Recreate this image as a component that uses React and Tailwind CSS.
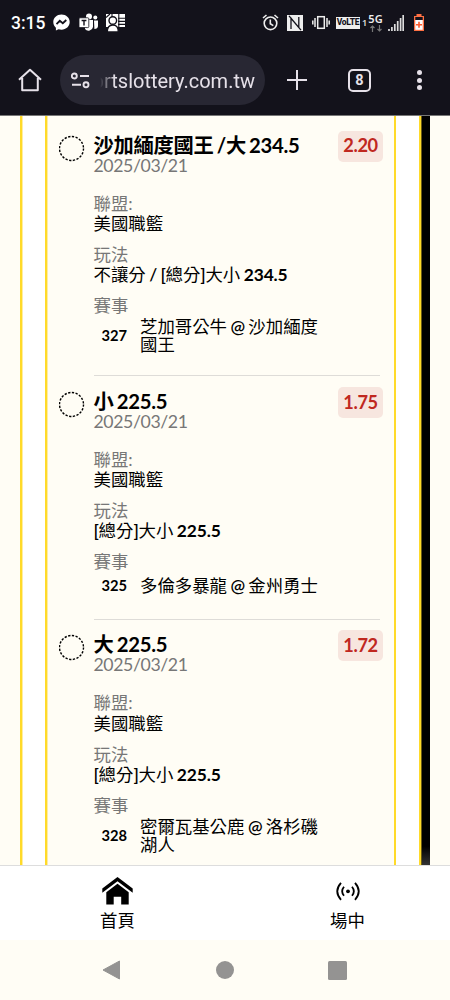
import React from "react";

const bets = [
  {
    title: "沙加緬度國王 /大 234.5",
    odds: "2.20",
    play: ["不讓分", " / [", "總分", "]", "大小"],
    total: "234.5",
    code: "327",
    match: [["芝加哥公牛", "沙加緬度"], ["國王"]],
  },
  {
    title: "小 225.5",
    odds: "1.75",
    play: ["", "[", "總分", "]", "大小"],
    total: "225.5",
    code: "325",
    match: [["多倫多暴龍", "金州勇士"]],
  },
  {
    title: "大 225.5",
    odds: "1.72",
    play: ["", "[", "總分", "]", "大小"],
    total: "225.5",
    code: "328",
    match: [["密爾瓦基公鹿", "洛杉磯"], ["湖人"]],
  },
];

function StatusBar() {
  return (
    <div className="flex h-[45px] items-center pl-[11px] pr-[25px] text-white">
      <span className="w-[42px] font-[Roboto] text-[17.500px] font-medium leading-[20px]">3:15</span>
      <svg className="h-[17px] w-[17px]" viewBox="0 0 17 17">
        <path fill="#fff" d="M8.5.5C3.9.5.3 3.8.3 8.1c0 2.4 1 4.2 2.6 5.6v2.8l2.6-1.2c1 .3 2 .4 3 .4 4.600 0 8.200-3.300 8.200-7.600S13.100.5 8.500.5z" />
        <path d="M3.500 10.200 6.800 6.800 9.800 9.200 13.300 6" fill="none" stroke="#13121b" strokeWidth="1.800" />
      </svg>
      <svg className="ml-[9px] h-[19px] w-[20px]" viewBox="0 0 20 19">
        <circle cx="10" cy="3.600" r="3" fill="#fff" />
        <circle cx="16.300" cy="4.500" r="2" fill="#fff" />
        <path fill="#fff" d="M6 7h8v7a4.500 4.500 0 0 1-8 2zM15 7.500h4v5.500c0 2-1.500 3-3.600 3z" />
        <rect x="0" y="4.800" width="9.800" height="9.800" rx="1" fill="#fff" stroke="#13121b" strokeWidth=".8" />
        <path d="M2.600 7.500h4.800M5 7.500v5" stroke="#13121b" strokeWidth="1.400" />
      </svg>
      <svg className="ml-[7px] h-[19px] w-[19px]" viewBox="0 0 19 19">
        <path fill="#fff" d="M0 1h19v13H0z" />
        <path d="M6 1v3M12.800 1v14M12 5.300h7M12 8.400h7M12 11.400h7M0 4.500 4 1" stroke="#13121b" strokeWidth="1.100" />
        <circle cx="6.800" cy="7.500" r="3.800" fill="#fff" stroke="#13121b" strokeWidth="1.400" />
        <path d="M1.300 19c0-5 2.200-7 5.500-7s5.500 2 5.500 7z" fill="#fff" stroke="#13121b" strokeWidth="1.300" />
      </svg>
      <div className="grow" />
      <svg className="h-[17px] w-[17px]" viewBox="0 0 17 17" fill="none" stroke="#eee" strokeWidth="1.600">
        <circle cx="8.500" cy="9.300" r="6.300" />
        <path d="M1 4 4.500 1M16 4 12.500 1M8.300 5.500v4.200l3 1.900" />
      </svg>
      <svg className="ml-[8px] h-[16px] w-[16px]" viewBox="0 0 16 16">
        <path fill="#eee" d="M0 0h16v16H0z" />
        <path d="M4 14V2.500M2 .8 11.800 12.500V2M4.200 3.500 14 15.200" fill="none" stroke="#13121b" strokeWidth="1.300" />
      </svg>
      <svg className="ml-[9px] h-[15px] w-[18px]" viewBox="0 0 18 15" fill="none" stroke="#eee" strokeWidth="1.500">
        <rect x="5.700" y="1.700" width="6.600" height="11.600" />
        <path d="M3 3v9M.8 5.500v4M15 3v9M17.200 5.500v4" />
      </svg>
      <span className="ml-[6px] flex h-[12px] w-[24px] items-center justify-center bg-[#eee] font-[Roboto] text-[8.500px] font-extrabold leading-none tracking-[-0.300px] text-[#13121b]">VoLTE</span>
      <span className="ml-[2px] w-[6px] font-['Noto_Sans'] text-[9px] font-semibold leading-none text-[#ddd]">1</span>
      <div className="flex w-[15px] flex-col items-center">
        <span className="font-['Noto_Sans'] text-[11px] font-semibold leading-[10px] text-[#eee]">5G</span>
        <svg className="mt-px h-[7px] w-[12px]" viewBox="0 0 12 7" fill="none" stroke="#777" strokeWidth="1.200">
          <path d="M2.500 7V1M.5 3 2.500 1l2 2M9.500 0v6M7.500 4l2 2 2-2" />
        </svg>
      </div>
      <svg className="ml-[5px] h-[17px] w-[16px]" viewBox="0 0 16 17" fill="none" stroke="#ddd" strokeWidth="1.700">
        <path d="M1 17v-2M3.900 17v-4M6.800 17V10M9.700 17V7M12.600 17V4M15.200 17V1" />
      </svg>
      <svg className="ml-[10px] mr-[1px] h-[17px] w-[10px]" viewBox="0 0 10 17">
        <path fill="#ff7043" d="M2.500 0h5v2H10v15H0V2h2.500z" />
        <path fill="#13121b" d="M1.300 3h7.400v3H1.300z" />
        <path fill="#fff" d="M1.300 6h7.400v9.800H1.300z" />
        <path d="M5 7.800v6M2 10.800h6" stroke="#ff5a2c" strokeWidth="1.600" />
      </svg>
    </div>
  );
}

function BrowserBar() {
  return (
    <div className="flex h-[70px] items-center">
      <svg className="ml-[18px] h-[24px] w-[24px]" viewBox="0 0 24 24" fill="none" stroke="#e6e1e9" strokeWidth="2">
        <path d="M1 11.700 12 1.700l11 10M4.200 10v12.300h15.600V10" strokeLinejoin="round" />
      </svg>
      <div className="ml-[18px] flex h-[50px] w-[205px] items-center rounded-full bg-[#282733] pl-[11px]">
        <svg className="h-[17px] w-[19px]" viewBox="0 0 19 17" fill="none" stroke="#e6e1e9" strokeWidth="1.900">
          <circle cx="3.300" cy="4" r="2.500" />
          <circle cx="15" cy="12.800" r="2.500" />
          <path d="M9 4h9M1 12.800h9" />
        </svg>
        <div className="ml-[10px] flex h-[30px] w-[155px] items-center justify-end overflow-hidden whitespace-nowrap pt-[2px] font-[Roboto] text-[20px] text-[#e6e1e9] [mask-image:linear-gradient(to_right,transparent,black_15px)]">
          ortslottery.com.tw
        </div>
      </div>
      <svg className="ml-[22px] h-[20px] w-[20px]" viewBox="0 0 20 20" stroke="#e6e1e9" strokeWidth="2">
        <path d="M10 0v20M0 10h20" />
      </svg>
      <div className="ml-[41px] flex h-[23px] w-[23px] items-center justify-center rounded-[5px] border-2 border-[#e6e1e9] pt-[2px] font-[Roboto] text-[14.500px] font-bold leading-none text-[#e6e1e9]">8</div>
      <div className="ml-[46px] flex flex-col gap-[2.500px]">
        <i className="size-[5px] rounded-full bg-[#e6e1e9]" />
        <i className="size-[5px] rounded-full bg-[#e6e1e9]" />
        <i className="size-[5px] rounded-full bg-[#e6e1e9]" />
      </div>
    </div>
  );
}

function Field({ label, children }) {
  return (
    <div className="h-[51.200px] whitespace-nowrap text-[17.400px] leading-[20.500px]">
      <div className="text-[#777]">{label}</div>
      {children}
    </div>
  );
}

function Latin({ children }) {
  return <span className="font-semibold tracking-[-0.300px] [word-spacing:-0.500px]">{children}</span>;
}

function Bet({ bet, last }) {
  return (
    <div className="flex pl-[12px]">
      <svg className="mt-[14.500px] h-[27px] w-[26px] shrink-0" viewBox="0 0 26 27" fill="none">
        <circle cx="12.500" cy="13.500" r="12" stroke="#000" strokeWidth="1.400" strokeDasharray="2.300 1.470" />
      </svg>
      <div className={`ml-[8.500px] w-[286.500px] shrink-0 ${last ? "" : "border-b border-[#dedcd8]"}`}>
        <div className="flex h-[73.500px] justify-between pt-[10.500px]">
          <div className="whitespace-nowrap">
            <div className="text-[20.300px] font-bold leading-[29px] tracking-[-0.270px] [word-spacing:-1.500px]">{bet.title}</div>
            <div className="mt-[-4px] text-[17.700px] leading-[20px] tracking-[-0.400px] text-[#777]">2025/03/21</div>
          </div>
          <div className="mr-[-3px] flex h-[31px] w-[45px] shrink-0 items-center justify-center rounded-[5px] bg-[#f7e6df] text-[18.200px] font-bold tracking-[-0.400px] text-[#c0281f]">{bet.odds}</div>
        </div>
        <Field label="聯盟:">美國職籃</Field>
        <Field label="玩法">
          {bet.play[0]}
          <Latin>{bet.play[1]}</Latin>
          {bet.play[2]}
          <Latin>{bet.play[3]}</Latin>
          {bet.play[4]}
          <b className="tracking-[-0.150px] [word-spacing:-0.500px]"> {bet.total}</b>
        </Field>
        <div className="h-[22px] text-[17.400px] leading-[20.500px] text-[#777]">賽事</div>
        <div className="mb-[20.300px] flex min-h-[24.500px] items-center">
          <span className="w-[46.500px] pb-[2px] pl-[8px] text-[14.700px] font-bold leading-none">{bet.code}</span>
          <div className="whitespace-nowrap text-[17.400px] leading-[18.500px]">
            {bet.match.map(([home, away]) => (
              <div key={home}>
                {home}
                {away && <Latin> @ </Latin>}
                {away}
              </div>
            ))}
          </div>
        </div>
      </div>
    </div>
  );
}

export default function App() {
  return (
    <div className="flex h-[1000px] w-[450px] flex-col overflow-hidden bg-[#fffdf5] font-[Lato,'Noto_Sans_CJK_TC',sans-serif] text-black">
      <header className="h-[116px] shrink-0 border-b border-[#777] bg-[#13121b]">
        <StatusBar />
        <BrowserBar />
      </header>
      <main className="flex h-[749px] shrink-0 overflow-hidden">
        <div className="w-[20px] shrink-0" />
        <div className="flex w-[401px] shrink-0 border-x-2 border-[#ffda29] bg-white px-[23px] shadow-[inset_1px_0_0_#ffeda0]">
          <div className="w-full border-x-2 border-[#ffda29] bg-[#fffdf5] pt-[4px] shadow-[inset_1px_0_0_#ffeda0]">
            {bets.map((bet, i) => (
              <Bet key={bet.code} bet={bet} last={i === bets.length - 1} />
            ))}
          </div>
        </div>
        <div className="w-[9px] shrink-0 border-l border-[#6b5c14] bg-[linear-gradient(to_bottom,#000_97.500%,#333)]" />
      </main>
      <nav className="flex h-[75px] shrink-0 border-t border-[#ddd] bg-white pl-[2.500px] text-[17.400px] leading-[22px]">
        <div className="flex w-[230px] shrink-0 flex-col items-center pt-[11px]">
          <svg className="h-[28px] w-[31px]" viewBox="0 0 31 28">
            <path d="M.3 11.500 15.500 0l15.200 11.500v4.300L15.500 4.300.3 15.800zM4.300 15.300l11.200-8.500 11.200 8.500V27.500h-7.500v-7.700h-7.500v7.700H4.300z" />
          </svg>
          <span className="mt-[5px]">首頁</span>
        </div>
        <div className="flex w-[230px] shrink-0 flex-col items-center pt-[11px]">
          <svg className="h-[28px] w-[24px]" viewBox="0 0 24 28" fill="none" stroke="#000" strokeWidth="1.800">
            <circle cx="12" cy="14.300" r="1.900" fill="#000" stroke="none" />
            <path d="M8 9.800q-3.700 4.500 0 9M16 9.800q3.700 4.500 0 9M5 5.800q-7.500 8.500 0 17M19 5.800q7.500 8.500 0 17" />
          </svg>
          <span className="mt-[5px]">場中</span>
        </div>
      </nav>
      <footer className="flex h-[60px] shrink-0 items-center pl-[102px]">
        <svg className="h-[20px] w-[18px]" viewBox="0 0 18 20">
          <path d="M1 10 17.500 1v18z" fill="#949392" stroke="#949392" strokeLinejoin="round" />
        </svg>
        <div className="ml-[96px] size-[18px] rounded-full bg-[#949392]" />
        <div className="ml-[94px] size-[19px] rounded-[1.500px] bg-[#949392]" />
      </footer>
    </div>
  );
}
